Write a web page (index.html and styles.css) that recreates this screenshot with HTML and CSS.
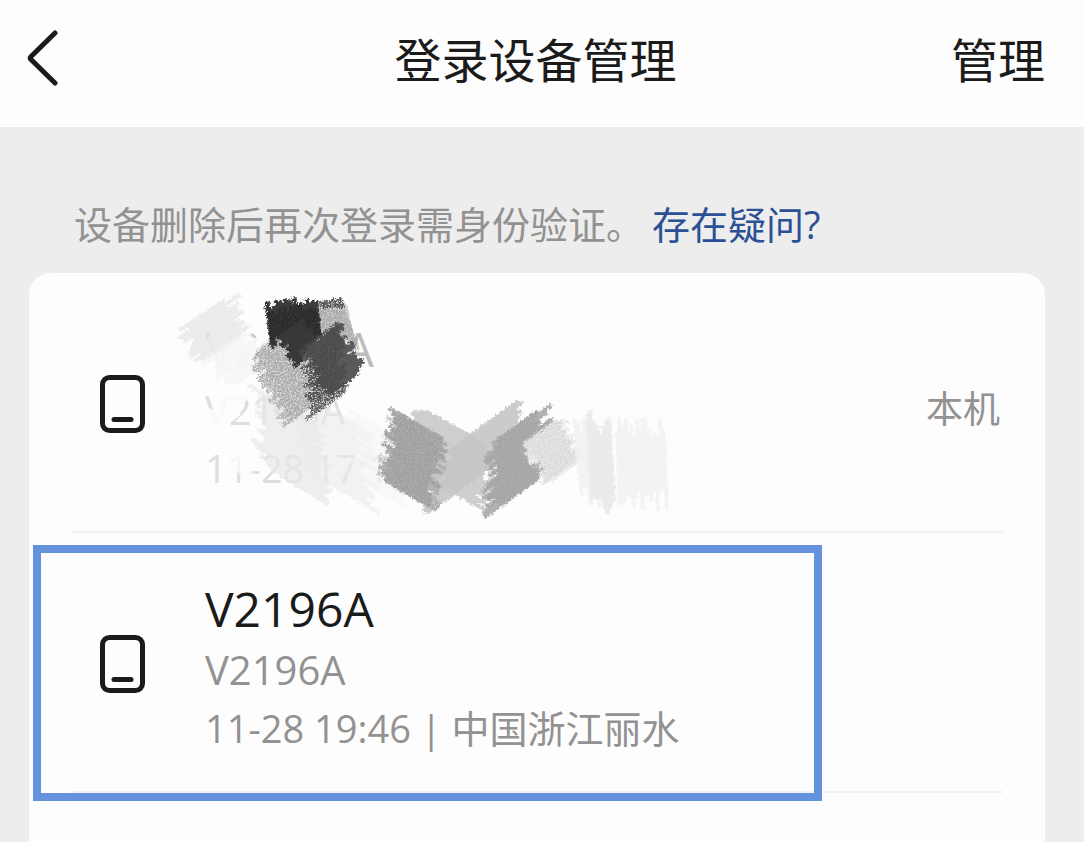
FILE: index.html
```html
<!DOCTYPE html>
<html lang="zh-CN">
<head>
<meta charset="utf-8">
<meta name="viewport" content="width=device-width, initial-scale=1">
<title>登录设备管理</title>
<link rel="stylesheet" href="styles.css">
</head>
<body>
<header class="topbar">
  <button class="back" type="button" aria-label="返回">
    <svg class="back-icon" viewBox="0 0 34 58" aria-hidden="true"><path d="M29 4 5 27.500Q3.500 29 5 30.500L29 54"/></svg>
  </button>
  <h1 class="title">登录设备管理</h1>
  <button class="manage" type="button">管理</button>
</header>
<main class="content">
  <p class="note">设备删除后再次登录需身份验证。<a class="help" href="#">存在疑问?</a></p>
  <ul class="card">
    <li class="device">
      <svg class="phone" viewBox="0 0 45 58" aria-hidden="true"><rect x="2.500" y="2.500" width="40" height="53" rx="7"/><path d="M14 44.500h17"/></svg>
      <div class="info masked">
        <span class="name">V2196A</span>
        <span class="model">V2196A</span>
        <span class="detail">11-28 17:1</span>
      </div>
      <span class="current">本机</span>
      <svg class="scribble" viewBox="140 280 540 250" aria-hidden="true">
        <defs>
          <filter id="grain" x="-10%" y="-10%" width="120%" height="120%">
            <feTurbulence type="fractalNoise" baseFrequency="0.6" numOctaves="2" seed="4" result="n"/>
            <feDisplacementMap in="SourceGraphic" in2="n" scale="6" xChannelSelector="R" yChannelSelector="G" result="d"/>
            <feColorMatrix in="n" values="0 0 0 0 0  0 0 0 0 0  0 0 0 0 0  3 0 0 0 -0.700" result="m"/>
            <feComposite in="d" in2="m" operator="in"/>
          </filter>
          <filter id="rough" x="-10%" y="-10%" width="120%" height="120%">
            <feTurbulence type="fractalNoise" baseFrequency="0.4" numOctaves="2" seed="9" result="n"/>
            <feDisplacementMap in="SourceGraphic" in2="n" scale="6" xChannelSelector="R" yChannelSelector="G"/>
          </filter>
        </defs>
        <g id="strokes"></g>
      </svg>
    </li>
    <li class="device">
      <svg class="phone" viewBox="0 0 45 58" aria-hidden="true"><rect x="2.500" y="2.500" width="40" height="53" rx="7"/><path d="M14 44.500h17"/></svg>
      <div class="info">
        <span class="name">V2196A</span>
        <span class="model">V2196A</span>
        <span class="detail">11-28 19:46 | 中国浙江丽水</span>
      </div>
      <div class="highlight"></div>
    </li>
  </ul>
</main>
<script src="scribble.js"></script>
</body>
</html>
```
FILE: styles.css
```css
* { box-sizing: border-box; }

body {
  margin: 0;
  min-height: 100vh;
  display: flex;
  flex-direction: column;
  background: #ededed;
  color: #1b1b1b;
  font-family: "Open Sans", "Noto Sans", "Noto Sans CJK SC", sans-serif;
}

button {
  border: 0;
  padding: 0;
  background: none;
  color: inherit;
  font: inherit;
}

.topbar {
  display: grid;
  grid-template-columns: 1fr auto 1fr;
  align-items: center;
  height: 127px;
  padding: 0 39px 8px 26px;
  background: #fdfdfd;
}

.back {
  justify-self: start;
  display: flex;
  padding-bottom: 4px;
}

.back-icon {
  width: 34px;
  height: 58px;
  fill: none;
  stroke: #1b1b1b;
  stroke-width: 5;
  stroke-linecap: round;
}

.title,
.manage {
  margin: 0;
  font-size: 47px;
  font-weight: 400;
  line-height: 64px;
}

.manage { justify-self: end; }

.content {
  flex: 1;
  display: flex;
  flex-direction: column;
  padding: 68px 39px 0 29px;
}

.note {
  margin: 0 0 20px;
  padding-left: 45px;
  color: #929292;
  font-size: 38px;
  line-height: 58px;
}

.help {
  margin-left: 8px;
  color: #2b5096;
  text-decoration: none;
}

.card {
  flex: 1;
  margin: 0;
  padding: 0 42px;
  list-style: none;
  background: #fdfdfd;
  border-radius: 22px 22px 0 0;
}

.device {
  position: relative;
  display: flex;
  align-items: center;
  gap: 60px;
  padding: 44px 3px 34px 29px;
  border-bottom: 2px solid #f1f1f1;
}

.phone {
  flex: none;
  width: 45px;
  height: 58px;
  margin-bottom: 6px;
  fill: none;
  stroke: #1b1b1b;
  stroke-width: 5;
  stroke-linecap: round;
}

.info {
  flex: 1;
  display: flex;
  flex-direction: column;
}

.name {
  font-size: 48px;
  line-height: 64px;
}

.model,
.detail {
  color: #929292;
  font-size: 38px;
  line-height: 58px;
}

.model { font-size: 40px; }

.masked .name { color: #bcbcbc; }

.masked .model,
.masked .detail { color: #dedede; }

.current {
  color: #929292;
  font-size: 37px;
}

.scribble {
  position: absolute;
  left: 69px;
  top: 8px;
  width: 540px;
  height: 250px;
  fill: none;
}

.highlight {
  position: absolute;
  left: -38px;
  right: 181px;
  top: 12px;
  bottom: -10px;
  border: 8px solid #6492dc;
}
```
FILE: scribble.js
```js
// Pencil hatching that hides the details of the current device.
// Each patch: spine start, spine end, stroke angle, stroke length, colour, filter, opacity.
const patches = [
  [215, 335, 250, 375, -35, 80, "#fdfdfd", "rough", 0.9],
  [285, 325, 300, 360, -35, 80, "#fdfdfd", "rough", 1],
  [240, 380, 215, 430, -35, 60, "#fdfdfd", "rough", 0.9],
  [232, 452, 262, 490, 30, 30, "#fdfdfd", "rough", 0.8],
  [206, 312, 222, 346, -33, 66, "#e8e8e8", "rough", 0.8],
  [225, 345, 250, 372, -35, 50, "#f3f3f3", "rough", 0.5],
  [288, 408, 294, 482, 31, 82, "#e8e8e8", "rough", 0.7],
  [330, 410, 340, 488, 31, 86, "#ececec", "rough", 0.6],
  [375, 425, 380, 490, 31, 60, "#f5f5f5", "rough", 0.6],
  [322, 322, 350, 326, 78, 42, "#cfcfcf", "rough", 0.9],
  [322, 322, 350, 326, 70, 42, "#8f8f8f", "grain", 0.6],
  [276, 336, 304, 408, -36, 54, "#e4e4e4", "rough", 1],
  [272, 342, 306, 408, -36, 52, "#949494", "grain", 0.7],
  [270, 323, 318, 320, 84, 42, "#3a3a3a", "rough", 1],
  [270, 326, 318, 322, 80, 36, "#262626", "grain", 0.8],
  [292, 328, 308, 354, -38, 34, "#383838", "rough", 1],
  [322, 338, 344, 382, -36, 48, "#5a5a5a", "rough", 1],
  [320, 336, 328, 402, -36, 46, "#4a4a4a", "grain", 0.9],
  [322, 304, 342, 302, 75, 10, "#505050", "grain", 1],
  [450, 424, 452, 490, 30, 84, "#cecece", "rough", 1],
  [486, 424, 462, 486, -36, 92, "#c6c6c6", "rough", 0.9],
  [418, 424, 408, 492, 30, 62, "#b2b2b2", "rough", 1],
  [418, 424, 408, 492, 30, 62, "#8f8f8f", "grain", 0.5],
  [516, 426, 520, 490, -36, 76, "#b0b0b0", "rough", 1],
  [516, 426, 520, 490, -36, 72, "#9c9c9c", "grain", 0.5],
  [544, 430, 564, 470, -36, 48, "#ededed", "rough", 1],
  [540, 430, 562, 468, -36, 46, "#c9c9c9", "grain", 0.5],
  [578, 452, 596, 468, 85, 76, "#f2f2f2", "rough", 0.9],
  [590, 460, 612, 468, 87, 88, "#ebebeb", "rough", 1],
  [618, 460, 665, 463, 88, 80, "#f3f3f3", "rough", 0.9]
];

let seed = 17;
function random() {
  seed = (seed * 16807) % 2147483647;
  return seed / 2147483647;
}

const strokes = document.getElementById("strokes");
for (const [x1, y1, x2, y2, angle, length, color, filter, opacity] of patches) {
  const dx = Math.cos(angle * Math.PI / 180) / 2;
  const dy = Math.sin(angle * Math.PI / 180) / 2;
  const across = Math.abs((x2 - x1) * dy - (y2 - y1) * dx) * 2;
  const count = Math.max(3, Math.round(across / 3));
  let d = "";
  for (let i = 0; i <= count; i++) {
    const cx = x1 + (x2 - x1) * i / count;
    const cy = y1 + (y2 - y1) * i / count;
    const a = length * (0.65 + random() * 0.55);
    const b = length * (0.65 + random() * 0.55);
    d += `M${(cx - dx * a).toFixed(1)} ${(cy - dy * a).toFixed(1)}L${(cx + dx * b).toFixed(1)} ${(cy + dy * b).toFixed(1)}`;
  }
  const path = document.createElementNS("http://www.w3.org/2000/svg", "path");
  path.setAttribute("d", d);
  path.setAttribute("stroke", color);
  path.setAttribute("stroke-width", "4");
  path.setAttribute("opacity", opacity);
  path.setAttribute("filter", `url(#${filter})`);
  strokes.append(path);
}
```
